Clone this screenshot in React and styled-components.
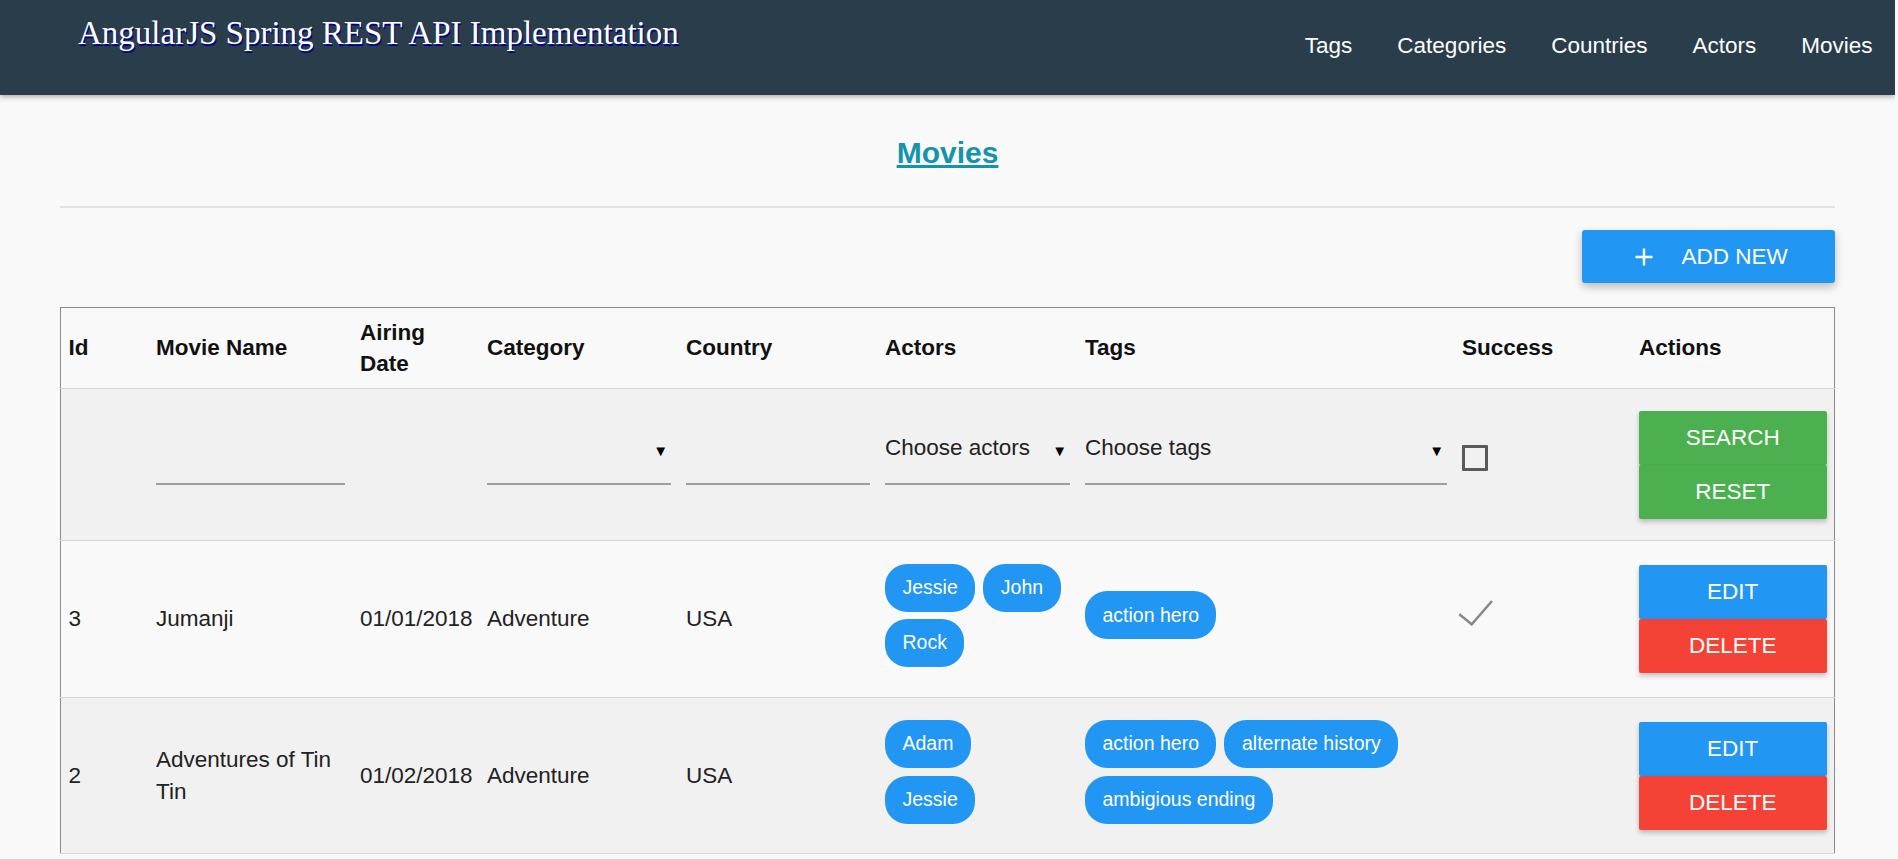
import React from 'react';
import styled, { createGlobalStyle } from 'styled-components';

const GlobalStyle = createGlobalStyle`
  html, body {
    margin: 0;
    padding: 0;
    background: #f9f9f9;
    font-family: "Liberation Sans", Arial, sans-serif;
    color: #222;
  }
`;

const movies = [
  { id: 3, name: 'Jumanji', date: '01/01/2018', category: 'Adventure', country: 'USA', actors: ['Jessie', 'John', 'Rock'], tags: ['action hero'], success: true },
  { id: 2, name: 'Adventures of Tin Tin', date: '01/02/2018', category: 'Adventure', country: 'USA', actors: ['Adam', 'Jessie'], tags: ['action hero', 'alternate history', 'ambigious ending'], success: false },
];

const columns = [
  { label: 'Id', width: 88 },
  { label: 'Movie Name', width: 204 },
  { label: 'Airing Date', width: 127 },
  { label: 'Category', width: 199 },
  { label: 'Country', width: 199 },
  { label: 'Actors', width: 200 },
  { label: 'Tags', width: 377 },
  { label: 'Success', width: 177 },
  { label: 'Actions', width: 203 },
];

function App() {
  return (
    <Page>
      <GlobalStyle />
      <Header>
        <Brand>AngularJS Spring REST API Implementation</Brand>
        <Nav>
          <NavLink href="#">Tags</NavLink>
          <NavLink href="#">Categories</NavLink>
          <NavLink href="#">Countries</NavLink>
          <NavLink href="#">Actors</NavLink>
          <NavLink href="#">Movies</NavLink>
        </Nav>
      </Header>

      <Main>
        <Heading><a href="#">Movies</a></Heading>
        <Divider />
        <Toolbar>
          <AddButton>
            <svg width="18" height="18" viewBox="0 0 18 18">
              <path d="M9 0.5v17M0.5 9h17" stroke="#fff" strokeWidth="2.4" fill="none" />
            </svg>
            ADD NEW
          </AddButton>
        </Toolbar>

        <Table>
          <colgroup>
            {columns.map(c => <col key={c.label} style={{ width: c.width }} />)}
          </colgroup>
          <thead>
            <tr>
              {columns.map(c => <Th key={c.label}>{c.label}</Th>)}
            </tr>
          </thead>
          <tbody>
            <tr>
              <FilterCell />
              <FilterCell><Field /></FilterCell>
              <FilterCell />
              <FilterCell><Field><span /><Arrow>▼</Arrow></Field></FilterCell>
              <FilterCell><Field /></FilterCell>
              <FilterCell><Field><span>Choose actors</span><Arrow>▼</Arrow></Field></FilterCell>
              <FilterCell><Field><span>Choose tags</span><Arrow>▼</Arrow></Field></FilterCell>
              <FilterCell><Checkbox /></FilterCell>
              <FilterCell>
                <ActionStack>
                  <ActionButton $bg="#4caf50">SEARCH</ActionButton>
                  <ActionButton $bg="#4caf50">RESET</ActionButton>
                </ActionStack>
              </FilterCell>
            </tr>
            {movies.map(m => (
              <tr key={m.id}>
                <Td>{m.id}</Td>
                <Td>{m.name}</Td>
                <Td>{m.date}</Td>
                <Td>{m.category}</Td>
                <Td>{m.country}</Td>
                <Td>
                  <ChipList>{m.actors.map(a => <Chip key={a}>{a}</Chip>)}</ChipList>
                </Td>
                <Td>
                  <ChipList>{m.tags.map(t => <Chip key={t}>{t}</Chip>)}</ChipList>
                </Td>
                <Td>
                  {m.success && (
                    <Check width="36" height="27" viewBox="0 0 36 27">
                      <polyline points="1.3,15.3 13.7,25.3 34,2" fill="none" stroke="#8a8a8a" strokeWidth="2.6" />
                    </Check>
                  )}
                </Td>
                <Td>
                  <ActionStack>
                    <ActionButton $bg="#2196f3">EDIT</ActionButton>
                    <ActionButton $bg="#f44336">DELETE</ActionButton>
                  </ActionStack>
                </Td>
              </tr>
            ))}
          </tbody>
        </Table>
      </Main>
    </Page>
  );
}

export default App;

const Page = styled.div`
  height: 100vh;
  overflow: hidden;
  margin-right: 3px;
`;

const Header = styled.header`
  height: 95px;
  background: #293d4b;
  display: flex;
  justify-content: space-between;
  align-items: flex-start;
  box-shadow: 0 2px 5px rgba(0, 0, 0, 0.3);
  position: relative;
  z-index: 1;
`;

const Brand = styled.h1`
  margin: 17px 0 0 78px;
  font-family: "Liberation Serif", "Times New Roman", serif;
  font-weight: normal;
  font-size: 33px;
  line-height: 33px;
  color: #fff;
  text-shadow: 1px 2px #00009a;
`;

const Nav = styled.nav`
  display: flex;
  padding-top: 30px;
`;

const NavLink = styled.a`
  padding: 0 22.5px;
  font-size: 22.5px;
  line-height: 31.5px;
  color: #fff;
  text-decoration: none;
`;

const Main = styled.main`
  padding: 0 60px;
`;

const Heading = styled.h2`
  margin: 35px 0 0;
  text-align: center;
  font-size: 30px;
  line-height: 45px;
  font-weight: bold;
  a {
    color: #1593ae;
    text-decoration: underline;
  }
`;

const Divider = styled.hr`
  margin: 31px 0 0;
  border: 0;
  border-top: 2px solid #e2e2e2;
`;

const Toolbar = styled.div`
  display: flex;
  justify-content: flex-end;
  margin: 22px 0 24px;
`;

const AddButton = styled.button`
  width: 253px;
  height: 53px;
  display: flex;
  align-items: center;
  justify-content: center;
  gap: 28px;
  padding: 0 0 0 6px;
  border: none;
  border-radius: 3px;
  background: #2196f3;
  color: #fff;
  font-family: "Liberation Sans", Arial, sans-serif;
  font-size: 22.5px;
  box-shadow: 0 4px 8px rgba(0, 0, 0, 0.25);
`;

const Table = styled.table`
  width: 100%;
  table-layout: fixed;
  border-collapse: collapse;
  border: 1px solid #8a8a8a;
  border-bottom-color: #d6d6d6;
  font-size: 22.5px;
  line-height: 31.5px;

  tbody tr {
    border-top: 1px solid #d6d6d6;
  }
  tbody tr:nth-child(odd) {
    background: #f1f1f1;
  }
`;

const Th = styled.th`
  padding: 8.5px 7.5px;
  text-align: left;
  vertical-align: middle;
  font-weight: bold;
  color: #111;
`;

const FilterCell = styled.td`
  padding: 21.5px 7.5px;
  vertical-align: top;
`;

const Td = styled.td`
  padding: 22.5px 7.5px 22px;
  vertical-align: middle;
  color: #222;
`;

const Field = styled.div`
  margin-top: 16px;
  height: 58px;
  box-sizing: border-box;
  padding-bottom: 14px;
  border-bottom: 2px solid #9e9e9e;
  display: flex;
  align-items: center;
  justify-content: space-between;
  color: #222;
  white-space: nowrap;
`;

const Arrow = styled.span`
  font-size: 15px;
  margin: 6px 3px 0 0;
  color: #000;
`;

const Checkbox = styled.div`
  margin-top: 34.5px;
  width: 26px;
  height: 26px;
  box-sizing: border-box;
  border: 3px solid #5a5a5a;
  border-radius: 1px;
`;

const ActionStack = styled.div`
  display: flex;
  flex-direction: column;
`;

const ActionButton = styled.button`
  height: 54px;
  border: none;
  border-radius: 2px;
  background: ${p => p.$bg};
  color: #fff;
  font-family: "Liberation Sans", Arial, sans-serif;
  font-size: 22.5px;
  box-shadow: 0 3px 5px rgba(0, 0, 0, 0.22);
`;

const ChipList = styled.div`
  display: flex;
  flex-wrap: wrap;
`;

const Chip = styled.span`
  height: 48px;
  margin: 0 8px 7.5px 0;
  padding: 0 17.5px;
  display: inline-flex;
  align-items: center;
  border-radius: 22px;
  background: #2196f3;
  color: #fff;
  font-size: 19.5px;
  white-space: nowrap;
`;

const Check = styled.svg`
  display: block;
  margin: 0 0 14px -4px;
`;
